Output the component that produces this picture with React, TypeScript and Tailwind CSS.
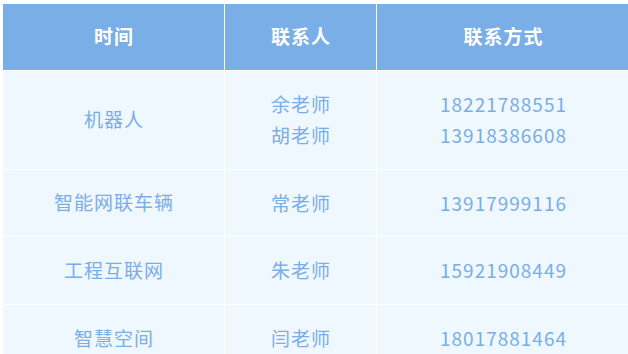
const rows = [
  { topic: '机器人', names: ['余老师', '胡老师'], phones: ['18221788551', '13918386608'], h: 'h-[98px]' },
  { topic: '智能网联车辆', names: ['常老师'], phones: ['13917999116'], h: 'h-[66px]' },
  { topic: '工程互联网', names: ['朱老师'], phones: ['15921908449'], h: 'h-[67px]' },
  { topic: '智慧空间', names: ['闫老师'], phones: ['18017881464'], h: 'h-[67px]' },
];

export default function App() {
  return (
    <div className="h-[354px] w-[628px] overflow-hidden bg-white pl-[3px] pt-[4px] font-['Noto_Sans_CJK_SC','Noto_Sans',sans-serif]">
      <div className="grid w-[626px] grid-cols-[221px_151px_252px] gap-px bg-white">
        {/* header */}
        {['时间', '联系人', '联系方式'].map((title) => (
          <div
            key={title}
            className="flex h-[66px] items-center justify-center bg-[#7aaee6] pb-px pl-px text-[19px] font-bold tracking-[1px] text-white"
          >
            {title}
          </div>
        ))}

        {/* body */}
        {rows.map((row) => (
          <>
            <div
              key={row.topic + '-t'}
              className={`${row.h} flex items-center justify-center bg-[#eff7ff] pb-px pl-px text-[19px] tracking-[1px] text-[#7aaee6]`}
            >
              {row.topic}
            </div>
            <div
              key={row.topic + '-n'}
              className={`${row.h} flex flex-col items-center justify-center bg-[#eff7ff] pb-[2px] pl-px text-[19px] leading-[31px] tracking-[1px] text-[#7aaee6]`}
            >
              {row.names.map((n) => (
                <span key={n}>{n}</span>
              ))}
            </div>
            <div
              key={row.topic + '-p'}
              className={`${row.h} flex flex-col items-center justify-center bg-[#eff7ff] pb-[2px] pl-px text-[19px] leading-[31px] tracking-[1px] text-[#7aaee6]`}
            >
              {row.phones.map((p) => (
                <span key={p}>{p}</span>
              ))}
            </div>
          </>
        ))}
      </div>
    </div>
  );
}
